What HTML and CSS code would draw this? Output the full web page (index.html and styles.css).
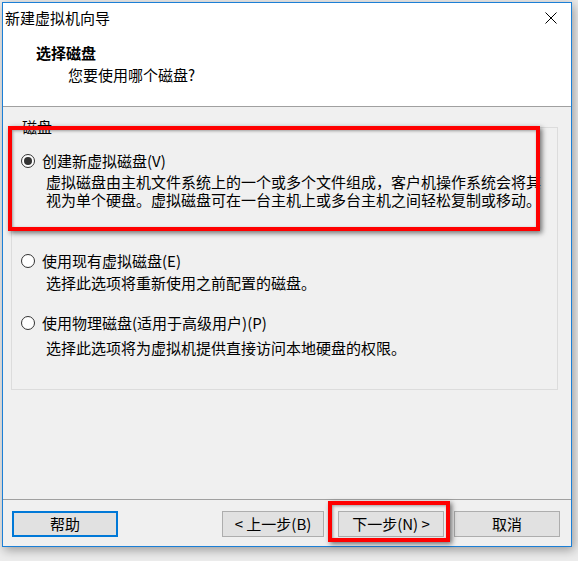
FILE: index.html
```html
<!DOCTYPE html>
<html lang="zh-CN">
<head>
<meta charset="utf-8">
<title>新建虚拟机向导</title>
<link rel="stylesheet" href="styles.css">
</head>
<body>
<div class="window">
  <div class="titlebar">
    <span class="title">新建虚拟机向导</span>
    <svg class="close" width="12" height="12" viewBox="0 0 12 12"><path d="M0.5 0.5 L11.5 11.5 M11.5 0.5 L0.5 11.5" stroke="#000" stroke-width="1" fill="none"/></svg>
  </div>
  <div class="header">
    <div class="h-title">选择磁盘</div>
    <div class="h-sub">您要使用哪个磁盘?</div>
  </div>
  <div class="content">
    <fieldset class="group">
      <legend class="legend">磁盘</legend>
      <div class="option opt1">
        <div class="opt-row"><span class="radio checked"></span><span class="opt-label">创建新虚拟磁盘(V)</span></div>
        <div class="desc d1">虚拟磁盘由主机文件系统上的一个或多个文件组成，客户机操作系统会将其<br>视为单个硬盘。虚拟磁盘可在一台主机上或多台主机之间轻松复制或移动。</div>
      </div>
      <div class="option opt2">
        <div class="opt-row"><span class="radio"></span><span class="opt-label">使用现有虚拟磁盘(E)</span></div>
        <div class="desc d2">选择此选项将重新使用之前配置的磁盘。</div>
      </div>
      <div class="option opt3">
        <div class="opt-row"><span class="radio"></span><span class="opt-label">使用物理磁盘(适用于高级用户)(P)</span></div>
        <div class="desc d3">选择此选项将为虚拟机提供直接访问本地硬盘的权限。</div>
      </div>
    </fieldset>
  </div>
  <div class="footer">
    <button class="btn btn-help">帮助</button>
    <button class="btn btn-prev">&lt; 上一步(B)</button>
    <button class="btn btn-next">下一步(N) &gt;</button>
    <button class="btn btn-cancel">取消</button>
  </div>
  <div class="mark mark-option"></div>
  <div class="mark mark-next"></div>
</div>
</body>
</html>
```
FILE: styles.css
```css
html, body {
  margin: 0;
  padding: 0;
}
body {
  width: 578px;
  height: 561px;
  overflow: hidden;
  background: #ececec;
  font-family: "Noto Sans CJK SC", "Noto Sans", sans-serif;
  font-size: 15px;
  color: #000;
}
.window {
  position: relative;
  margin: 2px 0 0 2px;
  width: 568px;
  height: 543px;
  border: 1px solid #1c7fd6;
  background: #f0f0f0;
  display: flex;
  flex-direction: column;
  box-shadow: 2px 3px 10px rgba(0, 0, 0, 0.35);
}
.titlebar {
  height: 30px;
  background: #fff;
  display: flex;
  align-items: center;
  justify-content: space-between;
  padding-left: 2px;
  line-height: 20px;
}
.close {
  margin-right: 14px;
  display: block;
}
.header {
  height: 73px;
  background: #fff;
  border-bottom: 1px solid #a0a0a0;
  box-sizing: border-box;
  height: 74px;
  padding: 10px 0 0 33px;
  line-height: 20px;
}
.h-title {
  font-weight: bold;
}
.h-sub {
  margin-top: 2px;
  padding-left: 32px;
}
.content {
  flex: 1;
  padding: 10px 0 0 8px;
}
.group {
  margin: 0;
  width: 547px;
  box-sizing: border-box;
  border: 1px solid #dcdcdc;
  padding: 0 0 32px 0;
}
.legend {
  margin-left: 9px;
  padding: 0 1px;
  line-height: 20px;
}
.option {
  padding-left: 9px;
}
.opt1 { margin-top: 14px; }
.opt2 { margin-top: 42px; }
.opt3 { margin-top: 21px; }
.opt-row {
  display: flex;
  align-items: center;
  line-height: 20px;
}
.radio {
  width: 14px;
  height: 14px;
  box-sizing: border-box;
  border: 1px solid #333;
  border-radius: 50%;
  background: #fff;
  margin-right: 7px;
  position: relative;
  flex: none;
}
.radio.checked::after {
  content: "";
  position: absolute;
  left: 2px;
  top: 2px;
  width: 8px;
  height: 8px;
  border-radius: 50%;
  background: #333;
}
.desc {
  padding-left: 25px;
  line-height: 18px;
}
.d1 { margin-top: 2px; }
.d2 { margin-top: 3px; }
.d3 { margin-top: 6px; }
.footer {
  border-top: 1px solid #a0a0a0;
  padding: 11px 0 9px 9px;
  display: flex;
  align-items: center;
}
.btn {
  height: 26px;
  box-sizing: border-box;
  width: 106px;
  border: 1px solid #adadad;
  background: #e1e1e1;
  font-family: inherit;
  font-size: 15px;
  color: #000;
  padding: 0;
  line-height: 20px;
}
.btn-help {
  border: 2px solid #0078d7;
}
.btn-prev {
  margin-left: 104px;
  width: 102px;
}
.btn-next {
  margin-left: 14px;
}
.btn-cancel {
  margin-left: 10px;
}
.mark {
  position: absolute;
  border: 4px solid #ff0000;
  box-sizing: border-box;
  box-shadow: 2px 2px 5px rgba(0, 0, 0, 0.55), inset 1px 1px 3px rgba(0, 0, 0, 0.35);
}
.mark-option {
  left: 5px;
  top: 123px;
  width: 532px;
  height: 105px;
}
.mark-next {
  left: 325px;
  top: 498px;
  width: 122px;
  height: 41px;
}
```
